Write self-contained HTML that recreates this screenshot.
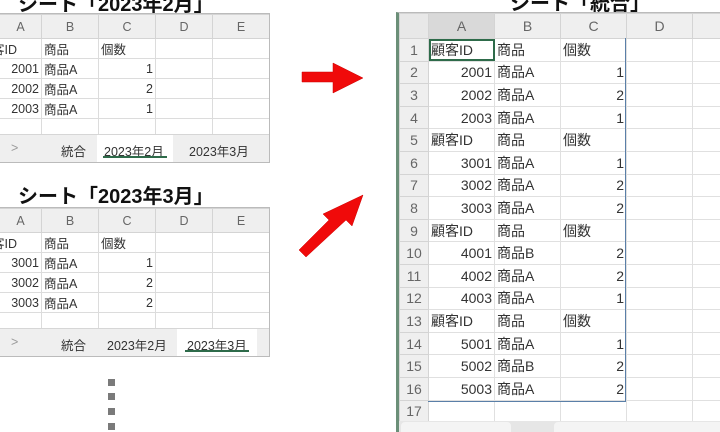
<!DOCTYPE html>
<html><head><meta charset="utf-8"><style>
*{margin:0;padding:0;box-sizing:border-box}
body{width:720px;height:426px;overflow:hidden;background:#fff;position:relative;font-family:"Liberation Sans","Noto Sans CJK JP",sans-serif;color:#222}
.t{position:absolute;font-weight:bold;font-size:20px;color:#111;white-space:nowrap}
table{position:absolute;border-collapse:collapse;table-layout:fixed;font-size:12.5px}
td{border:1px solid #dcdcdc;padding:0 2px;white-space:nowrap;overflow:hidden;color:#333}
td.r{text-align:right}
tr.h td{background:#efefef;color:#666;text-align:center;border-color:#d4d4d4}
.box{position:absolute;border:1px solid #bbb;overflow:hidden;background:#fff}
.tabs{position:absolute;left:0;right:0;bottom:0;background:#efefef;border-top:1px solid #d6d6d6;font-size:12.5px}
.tabs span{position:absolute;top:6px;color:#333}
.sq{position:absolute;left:108px;width:7px;height:7px;background:#7a7a7a}
.big td{font-size:14px;height:22.6px;border-color:#e0e0e0}
.big td.n{background:#efefef;color:#666;text-align:center;border-color:#d4d4d4}
</style></head><body>

<div class="t" style="left:18px;top:-12px">シート「2023年2月」</div>
<div class="box" style="left:-2px;top:13px;width:272px;height:150px">
<table style="left:0;top:0;width:270px">
<colgroup><col style="width:42px"><col style="width:57px"><col style="width:57px"><col style="width:57px"><col style="width:57px"></colgroup>
<tr class="h" style="height:24px"><td>A</td><td>B</td><td>C</td><td>D</td><td>E</td></tr>
<tr style="height:20px"><td style="text-indent:-10px">客ID</td><td>商品</td><td>個数</td><td></td><td></td></tr>
<tr style="height:19px"><td class="r">2001</td><td>商品A</td><td class="r">1</td><td></td><td></td></tr>
<tr style="height:20px"><td class="r">2002</td><td>商品A</td><td class="r">2</td><td></td><td></td></tr>
<tr style="height:19px"><td class="r">2003</td><td>商品A</td><td class="r">1</td><td></td><td></td></tr>
<tr style="height:20px"><td></td><td></td><td></td><td></td><td></td></tr>
</table>
<div class="tabs" style="height:28px">
<span style="left:12px;color:#999">&gt;</span>
<span style="left:62px">統合</span>
<div style="position:absolute;left:98px;top:0;width:76px;height:27px;background:#fff"></div>
<span style="left:105px">2023年2月</span>
<div style="position:absolute;left:104px;top:21px;width:64px;height:2px;background:#2e6b4a"></div>
<span style="left:190px">2023年3月</span>
</div>
</div>

<div class="t" style="left:18px;top:180px">シート「2023年3月」</div>
<div class="box" style="left:-2px;top:207px;width:272px;height:150px">
<table style="left:0;top:0;width:270px">
<colgroup><col style="width:42px"><col style="width:57px"><col style="width:57px"><col style="width:57px"><col style="width:57px"></colgroup>
<tr class="h" style="height:24px"><td>A</td><td>B</td><td>C</td><td>D</td><td>E</td></tr>
<tr style="height:20px"><td style="text-indent:-10px">客ID</td><td>商品</td><td>個数</td><td></td><td></td></tr>
<tr style="height:19px"><td class="r">3001</td><td>商品A</td><td class="r">1</td><td></td><td></td></tr>
<tr style="height:20px"><td class="r">3002</td><td>商品A</td><td class="r">2</td><td></td><td></td></tr>
<tr style="height:19px"><td class="r">3003</td><td>商品A</td><td class="r">2</td><td></td><td></td></tr>
<tr style="height:20px"><td></td><td></td><td></td><td></td><td></td></tr>
</table>
<div class="tabs" style="height:28px">
<span style="left:12px;color:#999">&gt;</span>
<span style="left:62px">統合</span>
<span style="left:108px">2023年2月</span>
<div style="position:absolute;left:178px;top:0;width:80px;height:27px;background:#fff"></div>
<span style="left:188px">2023年3月</span>
<div style="position:absolute;left:186px;top:21px;width:64px;height:2px;background:#2e6b4a"></div>
</div>
</div>

<div class="sq" style="top:379px"></div>
<div class="sq" style="top:393px"></div>
<div class="sq" style="top:408px"></div>
<div class="sq" style="top:423px"></div>

<svg style="position:absolute;left:0;top:0" width="720" height="426">
<polygon points="302,72 333,72 333,63 363,78 333,93 333,82 302,82" fill="#f00a0a" stroke="#c00" stroke-width="0.5"/>
<polygon points="299,250 329,220 323,214 363,195 352,226 346,220 306,257" fill="#f00a0a" stroke="#c00" stroke-width="0.5"/>
</svg>

<div class="t" style="left:510px;top:-13px">シート「統合」</div>
<div style="position:absolute;left:396px;top:12px;width:330px;height:420px;border-left:3px solid #6b8f78;border-top:1px solid #bbb;background:#fff;overflow:hidden">
<table class="big" style="left:0;top:0;width:360px">
<colgroup><col style="width:29px"><col style="width:66px"><col style="width:66px"><col style="width:66px"><col style="width:66px"><col style="width:67px"></colgroup>
<tr class="h" style="height:25px"><td style="background:#e8e8e8"></td><td style="background:#d9d9d9">A</td><td>B</td><td>C</td><td>D</td><td></td></tr>
<tr><td class="n">1</td><td style="outline:2px solid #2e6b4a;outline-offset:-2px">顧客ID</td><td>商品</td><td>個数</td><td></td><td></td></tr>
<tr><td class="n">2</td><td class="r">2001</td><td>商品A</td><td class="r">1</td><td></td><td></td></tr>
<tr><td class="n">3</td><td class="r">2002</td><td>商品A</td><td class="r">2</td><td></td><td></td></tr>
<tr><td class="n">4</td><td class="r">2003</td><td>商品A</td><td class="r">1</td><td></td><td></td></tr>
<tr><td class="n">5</td><td>顧客ID</td><td>商品</td><td>個数</td><td></td><td></td></tr>
<tr><td class="n">6</td><td class="r">3001</td><td>商品A</td><td class="r">1</td><td></td><td></td></tr>
<tr><td class="n">7</td><td class="r">3002</td><td>商品A</td><td class="r">2</td><td></td><td></td></tr>
<tr><td class="n">8</td><td class="r">3003</td><td>商品A</td><td class="r">2</td><td></td><td></td></tr>
<tr><td class="n">9</td><td>顧客ID</td><td>商品</td><td>個数</td><td></td><td></td></tr>
<tr><td class="n">10</td><td class="r">4001</td><td>商品B</td><td class="r">2</td><td></td><td></td></tr>
<tr><td class="n">11</td><td class="r">4002</td><td>商品A</td><td class="r">2</td><td></td><td></td></tr>
<tr><td class="n">12</td><td class="r">4003</td><td>商品A</td><td class="r">1</td><td></td><td></td></tr>
<tr><td class="n">13</td><td>顧客ID</td><td>商品</td><td>個数</td><td></td><td></td></tr>
<tr><td class="n">14</td><td class="r">5001</td><td>商品A</td><td class="r">1</td><td></td><td></td></tr>
<tr><td class="n">15</td><td class="r">5002</td><td>商品B</td><td class="r">2</td><td></td><td></td></tr>
<tr><td class="n">16</td><td class="r">5003</td><td>商品A</td><td class="r">2</td><td></td><td></td></tr>
<tr><td class="n">17</td><td></td><td></td><td></td><td></td><td></td></tr>
</table>
<div style="position:absolute;left:29px;top:25px;width:198px;height:364px;border:1px solid #5a7fa8;border-top:none;border-left:none"></div>
<div style="position:absolute;left:0;top:408px;width:330px;height:20px;background:#e6e6e6"></div>
<div style="position:absolute;left:2px;top:409px;width:110px;height:20px;background:#f4f4f4;border-radius:4px"></div>
<div style="position:absolute;left:155px;top:409px;width:180px;height:20px;background:#f4f4f4;border-radius:4px"></div>
</div>
</body></html>
